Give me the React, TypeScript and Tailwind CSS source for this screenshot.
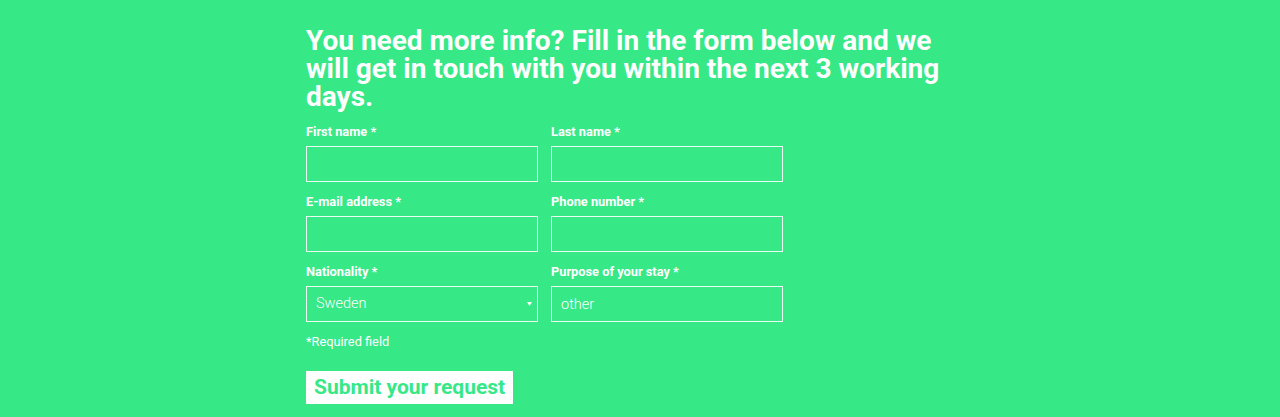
import { ChangeEvent, useState } from 'react';

const fields = [
  [
    { id: 'first', label: 'First name *' },
    { id: 'last', label: 'Last name *' },
  ],
  [
    { id: 'email', label: 'E-mail address *' },
    { id: 'phone', label: 'Phone number *' },
  ],
];

function Field({ label, children }: { label: string; children: React.ReactNode }) {
  return (
    <label className="flex flex-col w-[232px]">
      <span className="text-[12.8px] leading-[18px] font-bold text-white mb-[5px]">{label}</span>
      {children}
    </label>
  );
}

const inputCls =
  'h-[36px] w-full border border-white/90 bg-transparent px-[9px] text-[14.5px] font-light text-white outline-none';

export default function App() {
  const [values, setValues] = useState<Record<string, string>>({ purpose: 'other' });
  const set = (id: string) => (e: ChangeEvent<HTMLInputElement>) =>
    setValues({ ...values, [id]: e.target.value });

  return (
    <div className="min-h-[417px] w-full bg-[#37e887] font-['Roboto',sans-serif]">
      <div className="mx-auto w-[668px] pt-[27px]">
        <h2 className="text-[28px] leading-[28px] font-bold text-white">
          You need more info? Fill in the form below and we will get in touch with you within the next 3 working days.
        </h2>

        <form className="mt-[12px] flex flex-col gap-[11px]" onSubmit={(e) => e.preventDefault()}>
          {fields.map((row, i) => (
            <div key={i} className="flex gap-[13px]">
              {row.map((f) => (
                <Field key={f.id} label={f.label}>
                  <input className={inputCls} value={values[f.id] ?? ''} onChange={set(f.id)} />
                </Field>
              ))}
            </div>
          ))}

          <div className="flex gap-[13px]">
            <Field label="Nationality *">
              <div className="relative">
                <select className={`${inputCls} appearance-none`} defaultValue="Sweden">
                  <option className="text-black">Sweden</option>
                  <option className="text-black">Norway</option>
                  <option className="text-black">Denmark</option>
                </select>
                <svg
                  className="pointer-events-none absolute right-[6px] top-[16px]"
                  width="5"
                  height="4"
                  viewBox="0 0 5 4"
                >
                  <path d="M0 0h5L2.5 4z" fill="white" />
                </svg>
              </div>
            </Field>
            <Field label="Purpose of your stay *">
              <input className={inputCls} value={values.purpose} onChange={set('purpose')} />
            </Field>
          </div>

          <p className="text-[12.8px] leading-[18px] text-white">*Required field</p>

          <div className="mt-[9px]">
            <button
              type="submit"
              className="h-[33px] bg-white px-[8px] text-[21px] font-bold leading-[33px] text-[#37e887]"
            >
              Submit your request
            </button>
          </div>
        </form>
      </div>
    </div>
  );
}
